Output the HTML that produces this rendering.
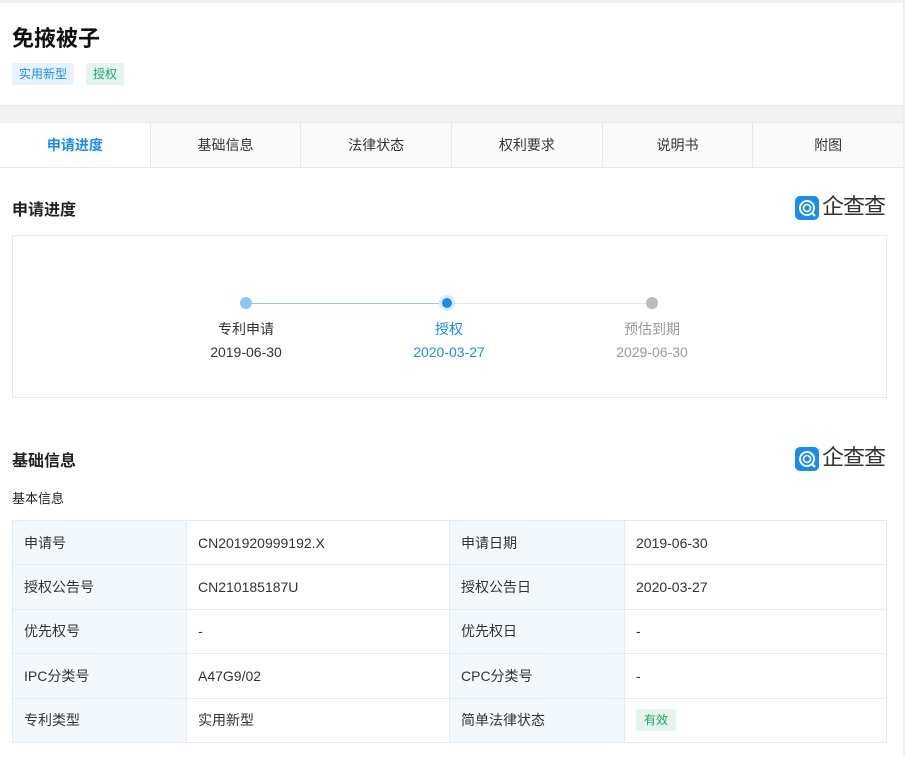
<!DOCTYPE html>
<html><head><meta charset="utf-8"><style>
*{margin:0;padding:0;box-sizing:border-box}
body{width:905px;height:757px;overflow:hidden;background:#fff;font-family:"Liberation Sans","Noto Sans CJK SC",sans-serif;color:#333;position:relative}
.abs{position:absolute}
.tag{position:absolute;top:63px;height:22px;line-height:22px;font-size:12px;padding:0 7px;border-radius:2px}
.tabs{position:absolute;top:122px;left:0;width:903px;height:46px;border-top:1px solid #e8e8e8;border-bottom:1px solid #e8e8e8;display:flex;background:#fafafa}
.tabs div{flex:1;text-align:center;line-height:44px;font-size:14px;border-right:1px solid #e8e8e8;color:#333}
.tabs div:last-child{border-right:none}
.h2{position:absolute;left:12px;font-size:16px;font-weight:bold;color:#222;line-height:20px}
.logo{position:absolute;left:795px;width:100px;height:26px;white-space:nowrap}
.logo .ic{position:absolute;left:0;top:1px;width:24px;height:24px;background:#1a8cf0;border-radius:5px}
.logo .t{position:absolute;left:27px;top:-2px;font-size:22px;line-height:28px;color:#333;letter-spacing:-1px;white-space:nowrap}
table{position:absolute;left:12px;top:520px;width:875px;border-collapse:collapse;font-size:14px}
td{border:1px solid #e1ecf5;height:44.4px;padding:0 11px;color:#333}
td.k{background:#f2f8fc;color:#333}
</style></head><body>
<div class="abs" style="left:0;top:0;width:905px;height:3px;background:#f0f0f0"></div>
<div class="abs" style="left:903px;top:0;width:2px;height:757px;background:#eee"></div>
<div class="abs" style="left:12px;top:24px;font-size:22px;font-weight:bold;color:#111;line-height:30px">免掖被子</div>
<div class="tag" style="left:12px;background:#e6f2fe;color:#1a8cf0">实用新型</div>
<div class="tag" style="left:86px;background:#e3f5ec;color:#1fa66a">授权</div>
<div class="abs" style="left:0;top:105px;width:903px;height:17px;background:#f3f3f3;border-top:1px solid #e8e8e8"></div>
<div class="tabs"><div style="color:#1a8cf0;font-weight:bold;background:#fff">申请进度</div><div>基础信息</div><div>法律状态</div><div>权利要求</div><div>说明书</div><div>附图</div></div>

<div class="h2" style="top:201px">申请进度</div>
<div class="logo" style="top:195px"><div class="ic"><svg width="24" height="24"><circle cx="12" cy="12" r="7" fill="none" stroke="#fff" stroke-width="2"/><circle cx="12" cy="12" r="3.5" fill="none" stroke="#fff" stroke-width="1.6"/><path d="M17 17l3 3" stroke="#fff" stroke-width="2"/></svg></div><div class="t">企查查</div></div>
<div class="abs" style="left:12px;top:235px;width:875px;height:163px;border:1px solid #dfecf6"></div>
<div class="abs" style="left:246px;top:303px;width:201px;height:1px;background:#8cc6f5"></div>
<div class="abs" style="left:447px;top:303px;width:205px;height:1px;background:#e6e6e6"></div>
<div class="abs" style="left:240px;top:297px;width:12px;height:12px;border-radius:50%;background:#8cc6f5"></div>
<div class="abs" style="left:439px;top:295px;width:16px;height:16px;border-radius:50%;background:#1a8cf0;border:3px solid #dcecfc"></div>
<div class="abs" style="left:646px;top:297px;width:12px;height:12px;border-radius:50%;background:#bbb"></div>
<div class="abs" style="left:186px;top:318px;width:120px;text-align:center;font-size:14px;line-height:23px;color:#333">专利申请<br>2019-06-30</div>
<div class="abs" style="left:389px;top:318px;width:120px;text-align:center;font-size:14px;line-height:23px;color:#1a8cf0">授权<br>2020-03-27</div>
<div class="abs" style="left:592px;top:318px;width:120px;text-align:center;font-size:14px;line-height:23px;color:#999">预估到期<br>2029-06-30</div>

<div class="h2" style="top:452px">基础信息</div>
<div class="logo" style="top:446px"><div class="ic"><svg width="24" height="24"><circle cx="12" cy="12" r="7" fill="none" stroke="#fff" stroke-width="2"/><circle cx="12" cy="12" r="3.5" fill="none" stroke="#fff" stroke-width="1.6"/><path d="M17 17l3 3" stroke="#fff" stroke-width="2"/></svg></div><div class="t">企查查</div></div>
<div class="abs" style="left:12px;top:488px;font-size:13px;color:#222">基本信息</div>
<table>
<tr><td class="k" style="width:174px">申请号</td><td style="width:263px">CN201920999192.X</td><td class="k" style="width:175px">申请日期</td><td>2019-06-30</td></tr>
<tr><td class="k">授权公告号</td><td>CN210185187U</td><td class="k">授权公告日</td><td>2020-03-27</td></tr>
<tr><td class="k">优先权号</td><td>-</td><td class="k">优先权日</td><td>-</td></tr>
<tr><td class="k">IPC分类号</td><td>A47G9/02</td><td class="k">CPC分类号</td><td>-</td></tr>
<tr><td class="k">专利类型</td><td>实用新型</td><td class="k">简单法律状态</td><td><span style="display:inline-block;background:#e3f5ec;color:#1fa66a;font-size:12px;padding:0 8px;line-height:22px;border-radius:2px">有效</span></td></tr>
</table>
</body></html>
